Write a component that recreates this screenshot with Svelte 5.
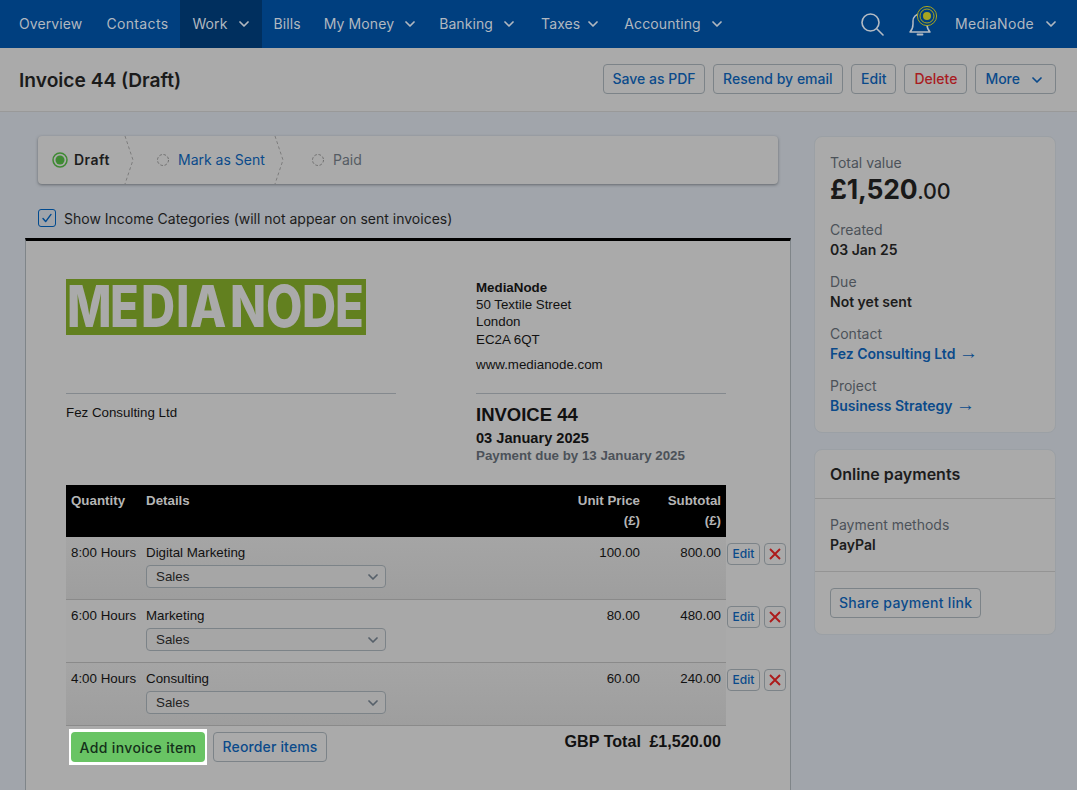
<script>
  const navLeft = [
    { label: 'Overview' }, { label: 'Contacts', cls: 'contacts' }, { label: 'Work', caret: true, cls: 'active' }, { label: 'Bills', cls: 'bills' },
    { label: 'My Money', caret: true }, { label: 'Banking', caret: true }, { label: 'Taxes', caret: true, cls: 'taxes' }, { label: 'Accounting', caret: true }
  ];
  const items = [
    { qty: '8:00 Hours', name: 'Digital Marketing', price: '100.00', sub: '800.00', tone: 'dark' },
    { qty: '6:00 Hours', name: 'Marketing', price: '80.00', sub: '480.00', tone: 'light' },
    { qty: '4:00 Hours', name: 'Consulting', price: '60.00', sub: '240.00', tone: 'dark' }
  ];
</script>

{#snippet caret()}
  <svg class="caret" viewBox="0 0 10 6" width="10" height="6"><path d="M1 1l4 4 4-4" fill="none" stroke="currentColor" stroke-width="1.7" stroke-linecap="round" stroke-linejoin="round"/></svg>
{/snippet}

{#snippet chevron()}
  <svg class="chevron" viewBox="0 0 10 48" width="10" height="48"><path d="M1 0l8 24-8 24" fill="none" stroke="#7d7d7d" stroke-width="1" stroke-dasharray="3 2.5"/></svg>
{/snippet}

<div class="page">
  <nav class="nav">
    <div class="nav-links">
      {#each navLeft as n}
        <div class="nav-item {n.cls ?? ''}">{n.label}{#if n.caret}{@render caret()}{/if}</div>
      {/each}
    </div>
    <div class="nav-right">
      <svg class="search" viewBox="0 0 24 24" width="24" height="24"><circle cx="10.5" cy="10.5" r="8.5" fill="none" stroke="#b5bcc4" stroke-width="1.6"/><path d="M17 17l6 6" stroke="#b5bcc4" stroke-width="1.6" stroke-linecap="round"/></svg>
      <svg class="bell" viewBox="0 0 30 32" width="30" height="32">
        <g transform="translate(0 -1)">
          <path d="M3 27c2-2 3-3.500 3-8v-3c0-4 3-7 7-7s7 3 7 7v3c0 4.500 1 6 3 8z" fill="none" stroke="#b5bcc4" stroke-width="1.500" stroke-linejoin="round"/>
          <path d="M10.500 29.500h5" stroke="#b5bcc4" stroke-width="1.800" stroke-linecap="round"/>
        </g>
        <circle cx="20" cy="10" r="9.600" fill="#003f7f" stroke="#a8a520" stroke-width="1"/>
        <circle cx="20" cy="10" r="7" fill="none" stroke="#a8a520" stroke-width="1"/>
        <circle cx="20" cy="10" r="4" fill="#a8a520"/>
      </svg>
      <div class="nav-item account">MediaNode{@render caret()}</div>
    </div>
  </nav>

  <header class="subhead">
    <h1>Invoice 44 (Draft)</h1>
    <div class="actions">
      <button class="btn save">Save as PDF</button>
      <button class="btn resend">Resend by email</button>
      <button class="btn">Edit</button>
      <button class="btn danger">Delete</button>
      <button class="btn more">More{@render caret()}</button>
    </div>
  </header>

  <main class="content">
    <section class="left">
      <div class="steps">
        <div class="step first">
          <svg viewBox="0 0 16 16" width="16" height="16"><circle cx="8" cy="8" r="7" fill="none" stroke="#3f8a33" stroke-width="1.500"/><circle cx="8" cy="8" r="4.500" fill="#3f8a33"/></svg>
          <strong>Draft</strong>
          {@render chevron()}
        </div>
        <div class="step second">
          <svg viewBox="0 0 14 14" width="14" height="14"><circle cx="7" cy="7" r="5.500" fill="none" stroke="#6d6d6d" stroke-dasharray="2.500 1.800"/></svg>
          <span class="link">Mark as Sent</span>
          {@render chevron()}
        </div>
        <div class="step third">
          <svg viewBox="0 0 14 14" width="14" height="14"><circle cx="7" cy="7" r="5.500" fill="none" stroke="#6d6d6d" stroke-dasharray="2.500 1.800"/></svg>
          <span class="muted">Paid</span>
        </div>
      </div>

      <div class="check-row">
        <span class="checkbox"><svg viewBox="0 0 18 18" width="18" height="18"><path d="M4.500 9.500l3 3.500 6-8" fill="none" stroke="#004a8f" stroke-width="1.600" stroke-linecap="round" stroke-linejoin="round"/></svg></span>
        <span>Show Income Categories (will not appear on sent invoices)</span>
      </div>

      <article class="invoice">
        <div class="top">
          <div class="logo-col">
            <svg class="logo" viewBox="0 0 300 56" width="300" height="56" role="img" aria-label="MediaNode">
              <rect width="300" height="56" fill="#62801f"/>
              <text transform="translate(0 48.300) scale(1.180 1.440)" x="0.800 37.300 63.600 93.200 105 139 169.500 200 228">MEDIANODE</text>
            </svg>
          </div>
          <address class="addr">
            <strong>MediaNode</strong><br/>50 Textile Street<br/>London<br/>EC2A 6QT
            <div class="web">www.medianode.com</div>
          </address>
        </div>

        <div class="meta">
          <div class="client">Fez Consulting Ltd</div>
          <div class="title">
            <h2>INVOICE 44</h2>
            <div class="date">03 January 2025</div>
            <div class="due">Payment due by 13 January 2025</div>
          </div>
        </div>

        <div class="table">
          <div class="row head">
            <div class="c-qty">Quantity</div>
            <div class="c-det">Details</div>
            <div class="c-price">Unit Price<br/>(£)</div>
            <div class="c-sub">Subtotal<br/>(£)</div>
          </div>
          {#each items as it}
            <div class="line">
              <div class="row item {it.tone}">
                <div class="c-qty">{it.qty}</div>
                <div class="c-det">
                  {it.name}
                  <div class="select">Sales
                    <svg viewBox="0 0 10 6" width="10" height="6"><path d="M1 1l4 4 4-4" fill="none" stroke="#56606a" stroke-width="1.700" stroke-linecap="round" stroke-linejoin="round"/></svg>
                  </div>
                </div>
                <div class="c-price">{it.price}</div>
                <div class="c-sub">{it.sub}</div>
              </div>
              <div class="row-actions">
                <button class="mini">Edit</button>
                <button class="mini x" aria-label="Delete">
                  <svg viewBox="0 0 12 12" width="12" height="12"><path d="M1 1l10 10M11 1l-10 10" stroke="#ad1b1b" stroke-width="1.900"/></svg>
                </button>
              </div>
            </div>
          {/each}
          <div class="foot">
            <div class="foot-btns">
              <span class="spot"><button class="add">Add invoice item</button></span>
              <button class="btn reorder">Reorder items</button>
            </div>
            <div class="total"><span>GBP Total</span><span>£1,520.00</span></div>
          </div>
        </div>
      </article>
    </section>

    <aside class="side">
      <div class="panel info">
        <div class="lbl">Total value</div>
        <div class="big">£1,520<small>.00</small></div>
        <div class="lbl">Created</div><div class="val">03 Jan 25</div>
        <div class="lbl">Due</div><div class="val">Not yet sent</div>
        <div class="lbl">Contact</div><div class="val link">Fez Consulting Ltd <span class="arrow">→</span></div>
        <div class="lbl">Project</div><div class="val link">Business Strategy <span class="arrow">→</span></div>
      </div>
      <div class="panel pay">
        <div class="pay-head">Online payments</div>
        <div class="pay-body">
          <div class="lbl">Payment methods</div>
          <div class="val">PayPal</div>
        </div>
        <div class="pay-foot"><button class="btn share">Share payment link</button></div>
      </div>
    </aside>
  </main>
</div>

<style>
  :global(body) { margin: 0; background: #a1a5ab; }
  .page { width: 1077px; height: 790px; overflow: hidden; font-family: Inter, "Noto Sans", sans-serif; font-size: 14px; color: #1c1c1c; background: #a1a5ab; }
  button { font-family: inherit; cursor: pointer; }

  .nav { height: 48px; background: #003f7f; display: flex; justify-content: space-between; color: #b1b8c0; }
  .nav-links { display: flex; padding-left: 7px; }
  .nav-item { display: flex; align-items: center; gap: 11px; padding: 0 12px 2px; box-sizing: border-box; height: 48px; font-size: 14px; letter-spacing: 0.1px; }
  .nav-item.contacts { letter-spacing: 0.35px; }
  .nav-item.active { background: #002f5e; padding-right: 13px; }
  .nav-item.bills { padding-left: 12px; padding-right: 11px; }
  .nav-item.taxes { padding-left: 15px; padding-right: 14px; gap: 8px; }
  .caret { flex: none; margin-top: 2px; }
  .nav-right { display: flex; align-items: center; padding-right: 9px; }
  .search { margin-right: 23px; margin-top: -1px; }
  .bell { margin-right: 6px; margin-top: -4px; overflow: visible; }
  .account { padding: 0 12px 2px; gap: 12px; letter-spacing: 0.3px; }

  .subhead { height: 64px; box-sizing: border-box; background: #aaaaaa; border-bottom: 1px solid #999; display: flex; align-items: center; justify-content: space-between; padding: 0 21px 0 19px; }
  h1 { margin: 1px 0 0; font-size: 19.2px; font-weight: 600; color: #1b1b1b; }
  .actions { display: flex; gap: 8px; margin-top: -2px; }
  .btn { height: 30px; box-sizing: border-box; padding: 0 9px; background: #aaaaaa; border: 1px solid #7c8388; border-radius: 4px; color: #0b4a8a; font-size: 14px; font-weight: 500; display: inline-flex; align-items: center; }
  .btn.save { padding: 0 8px; }
  .btn.resend { padding: 0 9.5px; }
  .btn.danger { color: #a81c22; }
  .btn.more { gap: 12px; padding-right: 13px; }
  .btn.reorder { letter-spacing: 0.15px; padding: 0 8.5px 1px; }
  .btn.share { letter-spacing: 0.3px; padding: 0 8px 1px; }

  .content { display: flex; padding-top: 24px; }
  .left { margin-left: 25px; flex: none; width: 766px; }
  .steps { margin-left: 13px; width: 740px; height: 48px; background: #aaaaaa; border-radius: 4px; box-shadow: 0 1px 3px rgba(50,55,60,.55); display: flex; align-items: center; }
  .step { position: relative; display: flex; align-items: center; height: 48px; box-sizing: border-box; padding-bottom: 1px; }
  .step.first { width: 95px; padding-left: 14px; gap: 6px; }
  .step.second { width: 150px; padding-left: 23px; gap: 8px; }
  .step.third { padding-left: 28px; gap: 8px; }
  .step strong { font-weight: 600; letter-spacing: 0.5px; }
  .chevron { position: absolute; right: -1px; top: 0; }
  .link { color: #0b4a8a; }
  .muted { color: #555c63; }

  .check-row { display: flex; align-items: center; gap: 8px; margin: 24px 0 0 13px; height: 20px; }
  .checkbox { width: 16px; height: 16px; border: 1px solid #004a8f; border-radius: 3px; display: flex; align-items: center; justify-content: center; }

  .invoice { margin-top: 10px; width: 766px; height: 560px; box-sizing: border-box; background: #aaaaaa; border-top: 3px solid #000; border-left: 1px solid #7f8589; border-right: 1px solid #7f8589; padding: 38px 0 0 40px; font-family: "Liberation Sans", Arial, sans-serif; font-size: 13.33px; color: #111; }
  .top { display: flex; height: 114px; }
  .logo-col { width: 410px; }
  .logo { display: block; overflow: visible; }
  .logo text { font-family: Inter, sans-serif; font-weight: 800; font-size: 40px; fill: #aaaaaa; }
  .addr { font-style: normal; line-height: 17.200px; }
  .web { margin-top: 8.600px; }
  .meta { display: flex; width: 660px; justify-content: space-between; height: 92px; }
  .client { width: 330px; box-sizing: border-box; border-top: 1px solid #84898e; padding-top: 11px; }
  .title { width: 250px; box-sizing: border-box; border-top: 1px solid #84898e; padding-top: 10px; }
  h2 { margin: 0; font-size: 18.500px; line-height: 21px; font-weight: 700; }
  .date { font-size: 14.600px; font-weight: 700; margin-top: 5px; line-height: 17px; }
  .due { font-size: 13.330px; font-weight: 700; color: #4c5259; line-height: 17px; }

  .row { width: 660px; box-sizing: border-box; display: flex; padding: 0 5px; }
  .head { height: 52px; background: #000; color: #b5b5b5; font-weight: 700; line-height: 20px; padding-top: 6px; }
  .c-qty { width: 75px; flex: none; }
  .c-det { flex: 1; }
  .c-price { width: 100px; text-align: right; flex: none; }
  .c-sub { width: 81px; text-align: right; flex: none; }
  .line { display: flex; align-items: flex-start; }
  .item { height: 63px; border-bottom: 1px solid #8a8a8a; padding-top: 8px; line-height: 16px; }
  .item.dark { background: linear-gradient(#a5a5a5, #9e9e9e); }
  .item.light { background: #a8a8a8; }
  .select { margin-top: 4px; width: 240px; height: 23px; box-sizing: border-box; border: 1px solid #7c8388; border-radius: 4px; background: #a6a6a6; padding: 0 7px 0 9px; display: flex; align-items: center; justify-content: space-between; color: #222; }
  .row-actions { display: flex; gap: 4px; padding: 6px 0 0 1px; font-family: Inter, sans-serif; }
  .mini { height: 22px; width: 33px; box-sizing: border-box; padding: 0 0 1px; font-size: 12px; font-weight: 500; border: 1px solid #7c8388; border-radius: 4px; background: #aaaaaa; color: #0b4a8a; display: flex; align-items: center; justify-content: center; }
  .mini.x { width: 22px; padding: 0; }

  .foot { width: 660px; display: flex; justify-content: space-between; padding: 3px 5px 0 3px; box-sizing: border-box; }
  .foot-btns { display: flex; align-items: center; gap: 6px; font-family: Inter, sans-serif; }
  .spot { display: block; background: #fff; padding: 3px 2px; line-height: 0; }
  .add { height: 30px; width: 134px; padding: 0; border: 0; border-radius: 4px; background: #69c464; color: #14301a; font-size: 14px; font-weight: 500; letter-spacing: 0.35px; }
  .total { display: flex; gap: 8.500px; font-size: 16.100px; font-weight: 700; line-height: 24px; }

  .side { margin-left: 23px; width: 242px; display: flex; flex-direction: column; gap: 16px; }
  .panel { background: #aaaaaa; border: 1px solid #9ba0a5; border-radius: 8px; box-sizing: border-box; }
  .info { height: 297px; padding: 17px 15px 0; }
  .lbl { color: #4c5259; font-size: 14px; line-height: 18px; margin-top: 14px; }
  .lbl:first-child { margin-top: 0; }
  .big { font-size: 26.500px; font-weight: 700; line-height: 33px; margin: 1px 0 0; color: #191919; letter-spacing: -0.2px; }
  .big + .lbl { margin-top: 13px; }
  .big small { font-size: 21.500px; font-weight: 500; }
  .val { font-size: 14px; font-weight: 600; line-height: 18px; margin-top: 2px; }
  .val.link { color: #0b4a8a; }
  .arrow { font-family: "Liberation Sans", sans-serif; font-size: 19px; font-weight: 400; line-height: 0; }
  .pay-head { height: 49px; padding: 0 15px; display: flex; align-items: center; box-sizing: border-box; border-bottom: 1px solid #949494; font-size: 16px; font-weight: 600; }
  .pay-body { padding: 17px 15px; border-bottom: 1px solid #949494; }
  .pay-body .lbl { margin-top: 0; }
  .pay-foot { padding: 16px 15px; line-height: 0; }
</style>
